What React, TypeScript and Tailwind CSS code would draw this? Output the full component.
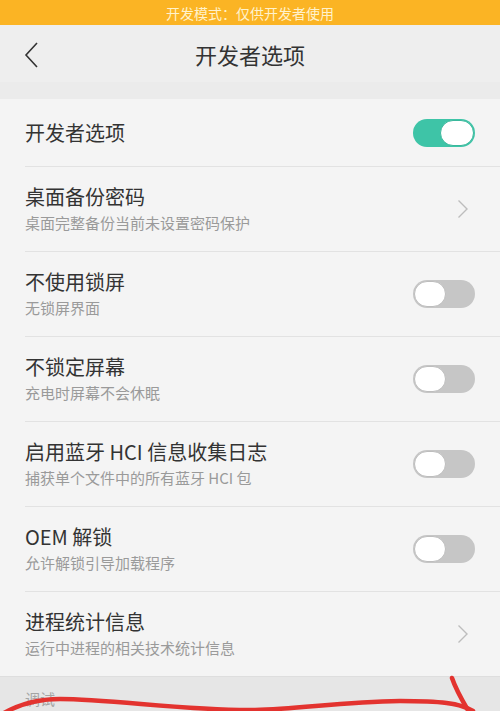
import React from "react";

const font = { fontFamily: '"Noto Sans CJK SC", "Noto Sans", sans-serif' };

function Toggle({ on }: { on: boolean }) {
  return on ? (
    <div className="w-[62px] h-[28px] rounded-full bg-[#3ec4a7] relative shrink-0">
      <div className="absolute right-[1px] top-[1px] w-[34px] h-[26px] rounded-full bg-white border border-[#3ab89c]" />
    </div>
  ) : (
    <div className="w-[62px] h-[28px] rounded-full bg-[#c6c6c6] relative shrink-0">
      <div className="absolute left-[1px] top-[1px] w-[32px] h-[26px] rounded-full bg-white border border-[#bdbdbd]" />
    </div>
  );
}

function Chevron() {
  return (
    <svg width="12" height="20" viewBox="0 0 12 20" className="shrink-0 mr-[6px]">
      <path d="M1.5 1.5 L10 10 L1.5 18.5" fill="none" stroke="#bdbdbd" strokeWidth="1.4" />
    </svg>
  );
}

type Row = { title: string; sub: string; right: "on" | "off" | "chev" };

const rows: Row[] = [
  { title: "桌面备份密码", sub: "桌面完整备份当前未设置密码保护", right: "chev" },
  { title: "不使用锁屏", sub: "无锁屏界面", right: "off" },
  { title: "不锁定屏幕", sub: "充电时屏幕不会休眠", right: "off" },
  { title: "启用蓝牙 HCI 信息收集日志", sub: "捕获单个文件中的所有蓝牙 HCI 包", right: "off" },
  { title: "OEM 解锁", sub: "允许解锁引导加载程序", right: "off" },
  { title: "进程统计信息", sub: "运行中进程的相关技术统计信息", right: "chev" },
];

export default function App() {
  return (
    <div className="w-[500px] h-[711px] overflow-hidden relative bg-[#ebebeb]" style={font}>
      <div className="h-[25px] bg-[#fbb424] flex items-center justify-center text-[14px] text-[#fff2cc] leading-none">
        开发模式：仅供开发者使用
      </div>
      <div className="h-[57px] bg-[#eeeeee] flex items-center relative">
        <svg width="16" height="26" viewBox="0 0 16 26" className="absolute left-[24px] top-[17px]">
          <path d="M13 1 L2 13 L13 25" fill="none" stroke="#333333" strokeWidth="1.6" />
        </svg>
        <div className="flex-1 text-center text-[22px] text-[#333333] leading-none">开发者选项</div>
      </div>
      <div className="h-[17px] bg-[#ebebeb]" />
      <div className="bg-[#f4f4f4]">
        <div className="h-[67px] flex items-center pl-[25px] pr-[25px] justify-between">
          <span className="text-[20px] leading-[24px] text-[#333333]">开发者选项</span>
          <Toggle on />
        </div>
        {rows.map((r, i) => (
          <div key={i} className="ml-[25px] border-t border-[#e2e2e2] h-[85px] flex items-center pr-[25px] justify-between">
            <div className="flex flex-col">
              <span className="text-[20px] leading-[24px] text-[#333333]">{r.title}</span>
              <span className="text-[15px] leading-[20px] text-[#9a9a9a] mt-[4px]">{r.sub}</span>
            </div>
            {r.right === "chev" ? <Chevron /> : <Toggle on={r.right === "on"} />}
          </div>
        ))}
      </div>
      <div className="bg-[#e6e6e6] border-t border-[#dedede] h-[60px] pl-[25px] pt-[9px]">
        <span className="text-[15px] leading-[20px] text-[#a5a5a5]">调试</span>
      </div>
      <svg className="absolute left-0 top-0 pointer-events-none" width="500" height="711" viewBox="0 0 500 711">
        <path
          d="M4 713 C20 704 40 699 60 699 C110 699 190 711 255 710 C300 709 340 702 400 701 C440 701 460 703 473 711"
          fill="none"
          stroke="#e3332f"
          strokeWidth="4.5"
          strokeLinecap="round"
        />
        <path d="M452 678 C456 690 462 700 469 712" fill="none" stroke="#e3332f" strokeWidth="4.5" strokeLinecap="round" />
      </svg>
    </div>
  );
}
